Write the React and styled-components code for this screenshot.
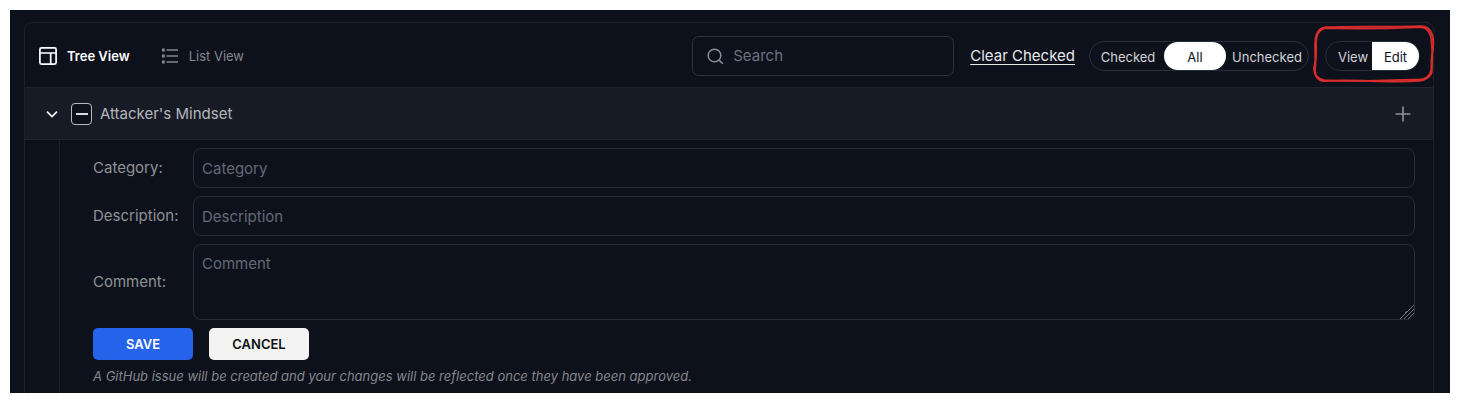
import React, { useEffect, useRef, useState } from "react";
import styled, { createGlobalStyle } from "styled-components";

const GlobalStyle = createGlobalStyle`
  *, *::before, *::after { box-sizing: border-box; }
  body {
    margin: 0;
    padding: 10px;
    background: #fff;
    font-family: Inter, "Liberation Sans", sans-serif;
    font-size: 15px;
    line-height: 20px;
  }
  button, input, textarea { font: inherit; color: inherit; margin: 0; }
`;

const Page = styled.main`
  padding: 12px 16px 0 14px;
  background: #0d111c;
  color: #8f9196;
`;

const Panel = styled.section`
  border: 1px solid #1d212b;
  border-bottom: 0;
  border-radius: 8px 8px 0 0;
`;

const Toolbar = styled.header`
  display: flex;
  align-items: center;
  justify-content: space-between;
  height: 64px;
  padding: 2px 13px 0;
`;

const Tabs = styled.nav`
  display: flex;
  gap: 30px;
`;

const Tab = styled.button`
  display: flex;
  align-items: center;
  gap: 9px;
  padding: 0;
  border: 0;
  background: none;
  font-size: 13px;
  font-weight: ${(p) => (p.$active ? 600 : 400)};
  color: ${(p) => (p.$active ? "#fff" : "#85878d")};
`;

const Actions = styled.div`
  display: flex;
  align-items: center;
`;

const SearchBox = styled.label`
  display: flex;
  align-items: center;
  gap: 8px;
  width: 262px;
  height: 40px;
  margin-right: 16px;
  padding: 0 13px;
  border: 1px solid #2f333d;
  border-radius: 7px;
`;

const SearchInput = styled.input`
  flex: 1;
  min-width: 0;
  padding: 0;
  border: 0;
  outline: 0;
  background: none;
  color: #e5e7eb;
  &::placeholder { color: #6b7280; opacity: 1; }
`;

const ClearLink = styled.a`
  margin-right: 14px;
  color: #e8e8ea;
  text-decoration: underline;
  text-underline-offset: 3px;
`;

const Segments = styled.div`
  position: relative;
  display: flex;
  height: 30px;
  padding-left: ${(p) => p.$inset}px;
  border: 1px solid #2a2e38;
  border-radius: 15px;
  & + & { margin-left: 16px; }
`;

const Segment = styled.button`
  width: ${(p) => p.$width}px;
  padding: 2px 0 0;
  border: 0;
  border-radius: ${(p) => p.$radius};
  background: ${(p) => (p.$active ? "#fff" : "transparent")};
  color: ${(p) => (p.$active ? "#0d111c" : "#d2d3d6")};
  font-size: 13px;
  text-align: center;
`;

const Highlight = styled.svg`
  position: absolute;
  top: -18px;
  left: -14px;
  pointer-events: none;
`;

const CategoryRow = styled.div`
  display: flex;
  align-items: center;
  height: 53px;
  padding: 0 20px;
  border: solid #20242e;
  border-width: 1px 0;
  background: #171b25;
`;

const IconButton = styled.button`
  display: flex;
  padding: 0;
  border: 0;
  background: none;
  color: ${(p) => p.$color};
`;

const CategoryLabel = styled.label`
  display: flex;
  flex: 1;
  align-items: center;
  gap: 8px;
  margin-left: 12px;
  color: #b4b6ba;
`;

const CheckBox = styled.input`
  display: grid;
  place-items: center;
  appearance: none;
  width: 21px;
  height: 22px;
  border: 1px solid #b9bbc0;
  border-radius: 4px;
  background: #0d111c;
  &::before {
    content: "";
    width: 12px;
    height: 2px;
  }
  &:indeterminate::before { background: #d9dadd; }
  &:checked::before { height: 12px; background: #d9dadd; }
`;

const Branch = styled.div`
  margin-left: 34px;
  padding: 8px 18px 9px 33px;
  border-left: 1px solid #1d212b;
`;

const Form = styled.form`
  display: flex;
  flex-direction: column;
  gap: 8px;
`;

const Field = styled.div`
  display: flex;
  align-items: center;
`;

const FieldLabel = styled.label`
  flex: 0 0 100px;
`;

const TextInput = styled.input`
  flex: 1;
  min-width: 0;
  height: ${(p) => (p.as === "textarea" ? 76 : 40)}px;
  padding: ${(p) => (p.as === "textarea" ? 9 : 0)}px 8px;
  border: 1px solid #2a2e38;
  border-radius: 8px;
  outline: 0;
  background: transparent;
  color: #e5e7eb;
  resize: vertical;
  &::placeholder { color: #636976; opacity: 1; }
  &::-webkit-resizer {
    background: linear-gradient(
      135deg,
      transparent 50%,
      #6d7078 50% 55%, transparent 55% 64%,
      #6d7078 64% 69%, transparent 69% 78%,
      #6d7078 78% 83%, transparent 83%
    );
  }
`;

const Buttons = styled.div`
  display: flex;
  gap: 16px;
`;

const FormButton = styled.button`
  width: 100px;
  height: 32px;
  padding: 0;
  border: 0;
  border-radius: 5px;
  background: ${(p) => (p.$primary ? "#2563eb" : "#f3f3f3")};
  color: ${(p) => (p.$primary ? "#fff" : "#0d0f14")};
  font-size: 13px;
  font-weight: 600;
`;

const Note = styled.p`
  margin: 0;
  font-size: 13px;
  line-height: 16px;
  font-style: italic;
  color: #85878c;
`;

const TreeIcon = () => (
  <svg width="20" height="20" viewBox="0 0 20 20" fill="none" stroke="currentColor" strokeWidth="1.7" aria-hidden="true">
    <rect x="1.9" y="1.9" width="16.2" height="16.2" rx="1.5" />
    <path d="M2 7h16M12.7 7v11" />
  </svg>
);

const ListIcon = () => (
  <svg width="20" height="20" viewBox="0 0 20 20" fill="none" stroke="currentColor" strokeWidth="1.7" aria-hidden="true">
    <path d="M6.5 4h11.5M6.5 10h11.5M6.5 16h11.5" />
    <path d="M2 4h2.8M2 10h2.8M2 16h2.8" strokeWidth="2.8" />
  </svg>
);

const SearchIcon = () => (
  <svg width="19" height="19" viewBox="0 0 19 19" fill="none" stroke="#8b8e95" strokeWidth="1.5" aria-hidden="true">
    <circle cx="8.5" cy="8.5" r="6.3" />
    <path d="M13.1 13.1L16.8 16.8" />
  </svg>
);

const ChevronIcon = () => (
  <svg width="14" height="14" viewBox="0 0 14 14" fill="none" stroke="currentColor" strokeWidth="1.7" aria-hidden="true">
    <path d="M2 4.6l5 5 5-5" />
  </svg>
);

const PlusIcon = () => (
  <svg width="20" height="20" viewBox="0 0 20 20" fill="none" stroke="currentColor" strokeWidth="1.6" aria-hidden="true">
    <path d="M10 2.6v14.8M2.6 10h14.8" />
  </svg>
);

const Marker = () => (
  <Highlight width="126" height="62" viewBox="0 0 126 62" fill="none" stroke="#d92d2d" strokeWidth="2" strokeLinecap="round" aria-hidden="true">
    <path d="M14 3.3C40 1.8 80 3.4 108 2.2C116 2 120 7 121 15C122.4 26 118 34 119.8 45C120.5 52 114 56 107 56.8C78 59 42 55.2 14 57C6 57.3 2.4 52 3 45C4.2 36 2.6 27 3.4 17C4 9 7 4 14 3.3Z" />
    <path d="M12 4.4C42 4.6 78 5.2 108 3.2C115 3.4 118.6 9 119.3 16C120.2 27 121.6 36 119.2 46C117 54 112 55.4 106 55.6C76 55.4 44 58.6 12 56C5 54.6 1.6 50 2 43C5 35 4.6 27 4 18C4.4 10 7 6 12 4.4Z" strokeWidth="1.6" />
  </Highlight>
);

const FILTERS = [
  { name: "Checked", width: 72, radius: "14px 0 0 14px" },
  { name: "All", width: 62, radius: "14px" },
  { name: "Unchecked", width: 82, radius: "0 14px 14px 0" },
];

const MODES = [
  { name: "View", width: 38, radius: "14px 0 0 14px" },
  { name: "Edit", width: 47, radius: "0 14px 14px 0" },
];

function SegmentedControl({ label, options, value, onChange, inset, children }) {
  return (
    <Segments role="group" aria-label={label} $inset={inset}>
      {options.map((o) => (
        <Segment
          key={o.name}
          type="button"
          $width={o.width}
          $radius={o.radius}
          $active={value === o.name}
          aria-pressed={value === o.name}
          onClick={() => onChange(o.name)}
        >
          {o.name}
        </Segment>
      ))}
      {children}
    </Segments>
  );
}

export default function App() {
  const [tab, setTab] = useState("tree");
  const [filter, setFilter] = useState("All");
  const [mode, setMode] = useState("Edit");
  const box = useRef(null);

  useEffect(() => {
    box.current.indeterminate = true;
  }, []);

  return (
    <>
      <GlobalStyle />
      <Page>
        <Panel>
          <Toolbar>
            <Tabs>
              <Tab type="button" $active={tab === "tree"} onClick={() => setTab("tree")}>
                <TreeIcon />
                Tree View
              </Tab>
              <Tab type="button" $active={tab === "list"} onClick={() => setTab("list")}>
                <ListIcon />
                List View
              </Tab>
            </Tabs>
            <Actions>
              <SearchBox>
                <SearchIcon />
                <SearchInput type="text" placeholder="Search" aria-label="Search" />
              </SearchBox>
              <ClearLink href="#clear">Clear Checked</ClearLink>
              <SegmentedControl label="Filter" options={FILTERS} value={filter} onChange={setFilter} inset={2} />
              <SegmentedControl label="Mode" options={MODES} value={mode} onChange={setMode} inset={8}>
                <Marker />
              </SegmentedControl>
            </Actions>
          </Toolbar>
          <CategoryRow>
            <IconButton type="button" $color="#f1f1f2" aria-label="Collapse">
              <ChevronIcon />
            </IconButton>
            <CategoryLabel>
              <CheckBox type="checkbox" ref={box} />
              Attacker's Mindset
            </CategoryLabel>
            <IconButton type="button" $color="#8f9196" aria-label="Add">
              <PlusIcon />
            </IconButton>
          </CategoryRow>
          <Branch>
            <Form onSubmit={(e) => e.preventDefault()}>
              <Field>
                <FieldLabel htmlFor="category">Category:</FieldLabel>
                <TextInput id="category" type="text" placeholder="Category" />
              </Field>
              <Field>
                <FieldLabel htmlFor="description">Description:</FieldLabel>
                <TextInput id="description" type="text" placeholder="Description" />
              </Field>
              <Field>
                <FieldLabel htmlFor="comment">Comment:</FieldLabel>
                <TextInput as="textarea" id="comment" placeholder="Comment" />
              </Field>
              <Buttons>
                <FormButton type="submit" $primary>SAVE</FormButton>
                <FormButton type="button">CANCEL</FormButton>
              </Buttons>
              <Note>A GitHub issue will be created and your changes will be reflected once they have been approved.</Note>
            </Form>
          </Branch>
        </Panel>
      </Page>
    </>
  );
}
